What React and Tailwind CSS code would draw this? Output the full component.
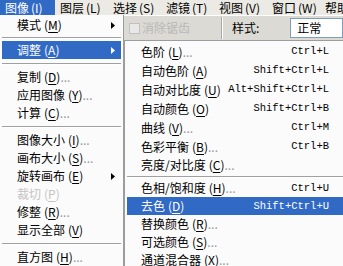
import React from "react";

const F = { fontFamily: '"Noto Sans CJK SC", "Noto Sans", sans-serif' };

function Lbl({ name, k, dots, disabled, hl }) {
  return (
    <span className="whitespace-nowrap">
      {name}
      <span className="ml-[3px]">(<span className="underline underline-offset-2">{k}</span>)</span>
      {dots && <span className={hl ? "text-white" : disabled ? "" : "text-[#9a9a9a]"}>...</span>}
    </span>
  );
}

function Arrow({ white }) {
  return (
    <svg width="4" height="7" viewBox="0 0 4 7" className="absolute right-[6px]">
      <path d="M0 0 L4 3.5 L0 7 Z" fill={white ? "#fff" : "#000"} />
    </svg>
  );
}

function LItem({ name, k, dots, arrow, hl, disabled }) {
  return (
    <div
      className={
        "relative flex items-center h-[18px] mx-[2px] pl-[15px] " +
        (hl ? "bg-[#316ac5] text-white" : disabled ? "text-[#c4c4c4]" : "text-black")
      }
    >
      <Lbl name={name} k={k} dots={dots} disabled={disabled} hl={hl} />
      {arrow && <Arrow white={hl} />}
    </div>
  );
}

function Sep({ h = "h-[9px]" }) {
  return (
    <div className={"flex items-center mx-[2px] " + h}>
      <div className="w-full h-[2px] border-t border-[#a0a0a0] border-b-white border-b" />
    </div>
  );
}

function RItem({ name, k, dots, sc, hl, h = "h-[19px]" }) {
  return (
    <div
      className={
        "flex items-center justify-between pl-[14px] pr-[14px] mx-[2px] " +
        h +
        " " +
        (hl ? "bg-[#316ac5] text-white" : "text-black")
      }
    >
      <Lbl name={name} k={k} dots={dots} hl={hl} />
      {sc && (
        <span className="text-[10.5px]" style={{ fontFamily: '"Liberation Mono", monospace' }}>
          {sc}
        </span>
      )}
    </div>
  );
}

export default function App() {
  const bar = [
    ["图像", "I"],
    ["图层", "L"],
    ["选择", "S"],
    ["滤镜", "T"],
    ["视图", "V"],
    ["窗口", "W"],
    ["帮助", "H"],
  ];
  return (
    <div className="relative w-[343px] h-[266px] overflow-hidden bg-[#d6d3ce] text-[12px] leading-none" style={F}>
      {/* menu bar */}
      <div className="flex h-[15px] bg-[#ebeae4] items-center overflow-hidden">
        {bar.map(([n, k], i) => (
          <div
            key={n}
            className={
              "flex items-center h-[15px] px-[5px] shrink-0 whitespace-nowrap " +
              (i === 0 ? "bg-[#316ac5] text-white w-[55px]" : "text-black w-[53px]")
            }
          >
            {n}
            <span className="ml-[2px]">(<span className="underline underline-offset-2">{k}</span>)</span>
          </div>
        ))}
      </div>
      {/* options bar */}
      <div className="flex items-center h-[25px] bg-[#dcdad4] border-t border-white pl-[129px]">
        <div className="flex items-center text-[#b8b8b8]">
          <span className="w-[11px] h-[11px] border border-[#c0c0c0] bg-[#e8e8e8] mr-[2px]" />
          消除锯齿
        </div>
        <div className="ml-[31px] w-[2px] h-[22px] border-l border-[#a8a8a8] border-r border-r-white" />
        <div className="ml-[9px] text-black">样式:</div>
        <div className="ml-[31px] flex items-center h-[20px] flex-1 bg-white border border-[#7f9db9] pl-[6px] text-black">
          正常
        </div>
      </div>
      <div className="h-full bg-[#c8c6c0]" />

      {/* image menu dropdown */}
      <div className="absolute left-0 top-[15px] w-[124px] h-[260px] bg-[#fbfbfb] border-r border-[#9c9c9c] pt-[1px]">
        <LItem name="模式" k="M" arrow />
        <Sep h="h-[7px]" />
        <LItem name="调整" k="A" arrow hl />
        <Sep />
        <LItem name="复制" k="D" dots />
        <LItem name="应用图像" k="Y" dots />
        <LItem name="计算" k="C" dots />
        <Sep />
        <LItem name="图像大小" k="I" dots />
        <LItem name="画布大小" k="S" dots />
        <LItem name="旋转画布" k="E" arrow />
        <LItem name="裁切" k="P" disabled />
        <LItem name="修整" k="R" dots />
        <LItem name="显示全部" k="V" />
        <Sep />
        <LItem name="直方图" k="H" dots />
      </div>

      {/* adjust submenu */}
      <div className="absolute left-[124px] top-[40px] w-[222px] h-[240px] bg-[#fbfbfb] border border-[#9c9c9c] pt-[1px]">
        <RItem name="色阶" k="L" dots sc="Ctrl+L" />
        <RItem name="自动色阶" k="A" sc="Shift+Ctrl+L" />
        <RItem name="自动对比度" k="U" sc="Alt+Shift+Ctrl+L" />
        <RItem name="自动颜色" k="O" sc="Shift+Ctrl+B" />
        <RItem name="曲线" k="V" dots sc="Ctrl+M" />
        <RItem name="色彩平衡" k="B" dots sc="Ctrl+B" />
        <RItem name="亮度/对比度" k="C" dots h="h-[18px]" />
        <Sep h="h-[5px]" />
        <RItem name="色相/饱和度" k="H" dots sc="Ctrl+U" h="h-[18px]" />
        <RItem name="去色" k="D" sc="Shift+Ctrl+U" hl h="h-[18px]" />
        <RItem name="替换颜色" k="R" dots h="h-[18px]" />
        <RItem name="可选颜色" k="S" dots h="h-[18px]" />
        <RItem name="通道混合器" k="X" dots h="h-[18px]" />
      </div>
    </div>
  );
}
